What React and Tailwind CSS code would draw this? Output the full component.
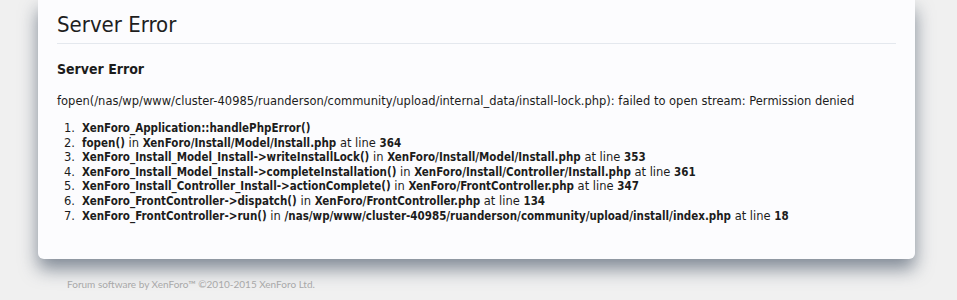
import React from 'react';

const trace = [
  [['XenForo_Application::handlePhpError()', true]],
  [['fopen()', true], [' in ', false], ['XenForo/Install/Model/Install.php', true], [' at line ', false], ['364', true]],
  [['XenForo_Install_Model_Install->writeInstallLock()', true], [' in ', false], ['XenForo/Install/Model/Install.php', true], [' at line ', false], ['353', true]],
  [['XenForo_Install_Model_Install->completeInstallation()', true], [' in ', false], ['XenForo/Install/Controller/Install.php', true], [' at line ', false], ['361', true]],
  [['XenForo_Install_Controller_Install->actionComplete()', true], [' in ', false], ['XenForo/FrontController.php', true], [' at line ', false], ['347', true]],
  [['XenForo_FrontController->dispatch()', true], [' in ', false], ['XenForo/FrontController.php', true], [' at line ', false], ['134', true]],
  [['XenForo_FrontController->run()', true], [' in ', false], ['/nas/wp/www/cluster-40985/ruanderson/community/upload/install/index.php', true], [' at line ', false], ['18', true]],
];

export default function App() {
  return (
    <div className="w-[957px] h-[300px] overflow-hidden bg-[#f0f0f0] text-[#1c1c1c] font-['DejaVu_Sans',sans-serif]">
      <div className="mx-[38px] w-[877px] bg-[#fcfcfe] rounded-b-[6px] shadow-[0_10px_18px_rgba(55,70,90,0.6)] px-[19px] pt-[10px] pb-[36px]">
        <h1 className="text-[22px] leading-[30px] text-[#1e1e1e] pb-[3px] border-b border-[#e4e8ee] font-['DejaVu_Sans_Condensed',sans-serif]">Server Error</h1>
        <h2 className="mt-[15px] text-[14px] font-bold leading-[20px] font-['DejaVu_Sans_Condensed',sans-serif]">Server Error</h2>
        <p className="mt-[14px] text-[11.5px] leading-[16px]">
          fopen(/nas/wp/www/cluster-40985/ruanderson/community/upload/internal_data/install-lock.php): failed to open stream: Permission denied
        </p>
        <ol className="mt-[12px] text-[11.5px] leading-[14.6px] flex flex-col">
          {trace.map((parts, i) => (
            <li key={i} className="flex">
              <span className="w-[25px] text-right pr-[7px]">{i + 1}.</span>
              <span>
                {parts.map(([t, b], j) => (
                  <span key={j} className={b ? "font-bold font-['DejaVu_Sans_Condensed',sans-serif]" : ''}>{t}</span>
                ))}
              </span>
            </li>
          ))}
        </ol>
      </div>
      <div className="ml-[67px] mt-[18px] text-[10px] text-[#a8a8a8] font-['Lato',sans-serif]">
        Forum software by XenForo™ ©2010-2015 XenForo Ltd.
      </div>
    </div>
  );
}
